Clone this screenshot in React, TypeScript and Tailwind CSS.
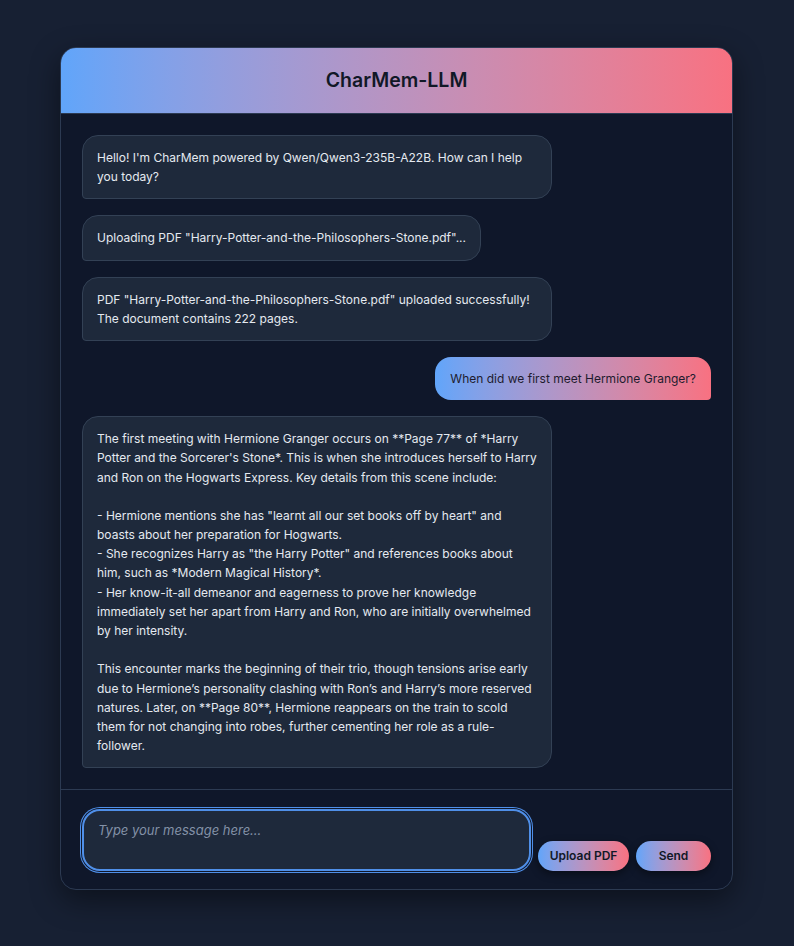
import { useState } from 'react';

type Msg = { role: 'bot' | 'user'; text: string };

const messages: Msg[] = [
  { role: 'bot', text: "Hello! I'm CharMem powered by Qwen/Qwen3-235B-A22B. How can I help you today?" },
  { role: 'bot', text: 'Uploading PDF "Harry-Potter-and-the-Philosophers-Stone.pdf"...' },
  {
    role: 'bot',
    text: 'PDF "Harry-Potter-and-the-Philosophers-Stone.pdf" uploaded successfully! The document contains 222 pages.',
  },
  { role: 'user', text: 'When did we first meet Hermione Granger?' },
  {
    role: 'bot',
    text: `The first meeting with Hermione Granger occurs on **Page 77** of *Harry Potter and the Sorcerer's Stone*. This is when she introduces herself to Harry and Ron on the Hogwarts Express. Key details from this scene include:

- Hermione mentions she has "learnt all our set books off by heart" and boasts about her preparation for Hogwarts.
- She recognizes Harry as "the Harry Potter" and references books about him, such as *Modern Magical History*.
- Her know-it-all demeanor and eagerness to prove her knowledge immediately set her apart from Harry and Ron, who are initially overwhelmed by her intensity.

This encounter marks the beginning of their trio, though tensions arise early due to Hermione\u2019s personality clashing with Ron\u2019s and Harry\u2019s more reserved natures. Later, on **Page 80**, Hermione reappears on the train to scold them for not changing into robes, further cementing her role as a rule-follower.`,
  },
];

export default function App() {
  const [input, setInput] = useState('');

  return (
    <div className="min-h-screen w-full bg-[#172033] pt-[47px] pb-10 font-['Inter',sans-serif]">
      <div className="ml-[60px] w-[673px] overflow-hidden rounded-2xl border border-[#2c3a52] bg-[#0f172a] shadow-[0_10px_30px_rgba(0,0,0,0.45)]">
        {/* Header */}
        <div className="flex h-[66px] items-center justify-center border-b border-[#2c3a52] bg-gradient-to-r from-[#60a5fa] to-[#f87181]">
          <h1 className="text-[19.5px] font-semibold text-[#111827]">CharMem-LLM</h1>
        </div>

        {/* Messages */}
        <div className="flex flex-col gap-4 px-[21px] pt-[21px] pb-[21px]">
          {messages.map((m, i) =>
            m.role === 'bot' ? (
              <div
                key={i}
                className="max-w-[470px] self-start whitespace-pre-wrap rounded-2xl rounded-bl-[4px] border border-[#334155] bg-[#1e293b] px-[14px] py-3 text-[12px] leading-[1.6] font-normal text-[#e5e9f0]"
              >
                {m.text}
              </div>
            ) : (
              <div
                key={i}
                className="max-w-[470px] self-end rounded-2xl rounded-br-[4px] bg-gradient-to-r from-[#60a5fa] to-[#f87181] px-[15px] py-3 text-[12px] leading-[1.6] text-[#1e1b2e]"
              >
                {m.text}
              </div>
            )
          )}
        </div>

        {/* Input */}
        <div className="flex items-end gap-[7px] border-t border-[#2c3a52] px-[21px] pt-[19px] pb-[18px]">
          <textarea
            value={input}
            onChange={(e) => setInput(e.target.value)}
            placeholder="Type your message here..."
            className="h-[62px] flex-1 resize-none rounded-[18px] border-2 border-[#4f8fe8] bg-[#1e293b] px-[14px] py-[10px] text-[13px] text-[#e2e8f0] outline-none ring-1 ring-[#4f8fe8] ring-offset-1 ring-offset-[#0f172a] placeholder:italic placeholder:text-[#8391a7]"
          />
          <button className="h-[30px] w-[91px] rounded-full bg-gradient-to-r from-[#60a5fa] to-[#f87181] text-[12px] font-semibold text-[#111827] shadow-[0_3px_8px_rgba(0,0,0,0.45)]">
            Upload PDF
          </button>
          <button className="h-[30px] w-[75px] rounded-full bg-gradient-to-r from-[#60a5fa] to-[#f87181] text-[12px] font-semibold text-[#111827] shadow-[0_3px_8px_rgba(0,0,0,0.45)]">
            Send
          </button>
        </div>
      </div>
    </div>
  );
}
